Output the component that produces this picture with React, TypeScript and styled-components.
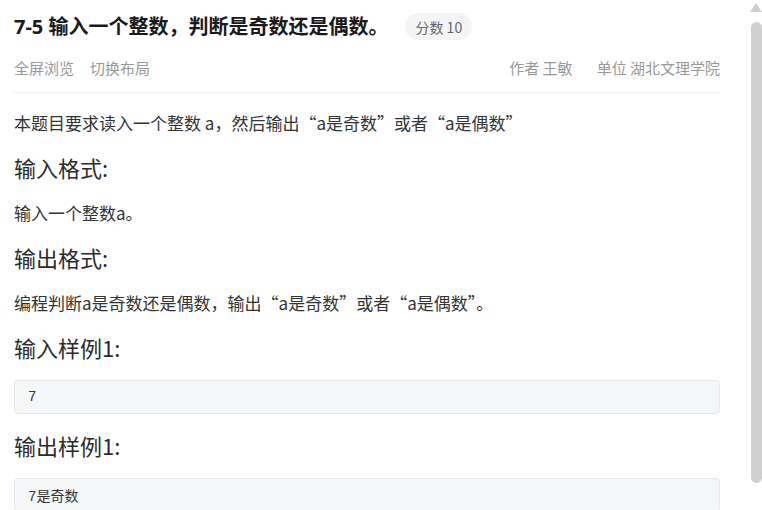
import React from "react";
import styled, { createGlobalStyle } from "styled-components";

const GlobalStyle = createGlobalStyle`
  html, body {
    margin: 0;
    padding: 0;
    background: #fff;
  }
  body {
    font-family: "Noto Sans CJK SC", "Noto Sans", sans-serif;
    color: #333;
  }
`;

const Page = styled.div`
  padding: 13px 42px 26px 14px;
`;

const Header = styled.div`
  display: flex;
  align-items: center;
  gap: 17px;
  height: 27px;
`;

const Title = styled.h1`
  margin: 0;
  font-family: "Noto Sans", "Noto Sans CJK SC", sans-serif;
  font-size: 20px;
  line-height: 27px;
  font-weight: 700;
  color: #1a1a1a;
`;

const Badge = styled.span`
  display: inline-flex;
  align-items: center;
  height: 27px;
  padding: 0 10px;
  border-radius: 14px;
  background: #f3f4f6;
  color: #666;
  font-size: 14px;
`;

const Meta = styled.div`
  display: flex;
  justify-content: space-between;
  align-items: center;
  margin-top: 18px;
  padding-bottom: 14px;
  border-bottom: 1px solid #eceef1;
  font-size: 15px;
  line-height: 20px;
  color: #999;
`;

const MetaGroup = styled.div<{ $gap: number }>`
  display: flex;
  gap: ${(p) => p.$gap}px;
`;

const Body = styled.div`
  padding-top: 17px;
`;

const Para = styled.p`
  margin: 0;
  font-size: 17px;
  line-height: 26px;
  color: #333;
`;

const Heading = styled.h3`
  margin: 16px 0 18px;
  font-size: 22px;
  line-height: 30px;
  font-weight: 400;
  color: #2b2b2b;
`;

const Sample = styled.pre`
  margin: 0;
  height: 34px;
  box-sizing: border-box;
  display: flex;
  align-items: center;
  padding: 0 13px;
  background: #f5f6f8;
  border: 1px solid #e6e8eb;
  border-radius: 4px;
  font-family: "Liberation Mono", "Noto Sans CJK SC", monospace;
  font-size: 14px;
  color: #333;
`;

/* stand-in for the browser scrollbar in the screenshot */
const ScrollBar = styled.div`
  position: fixed;
  top: 0;
  right: 0;
  width: 12px;
  height: 100vh;
  background: #fff;
  display: flex;
  flex-direction: column;
  align-items: flex-end;
`;

const ScrollArrow = styled.div`
  margin-top: 3px;
  width: 0;
  height: 0;
  border-left: 6px solid transparent;
  border-right: 6px solid transparent;
  border-bottom: 9px solid #d0d0d0;
`;

const ScrollThumb = styled.div`
  margin-top: 10px;
  width: 11px;
  height: 461px;
  border-radius: 6px;
  background: #d0d0d0;
`;

const sections = [
  { title: "输入格式:", text: "输入一个整数a。" },
  { title: "输出格式:", text: "编程判断a是奇数还是偶数，输出“a是奇数”或者“a是偶数”。" },
];

const samples = [
  { title: "输入样例1:", code: "7" },
  { title: "输出样例1:", code: "7是奇数" },
];

export default function App() {
  return (
    <>
      <GlobalStyle />
      <Page>
        <Header>
          <Title>7-5 输入一个整数，判断是奇数还是偶数。</Title>
          <Badge>分数 10</Badge>
        </Header>
        <Meta>
          <MetaGroup $gap={16}>
            <span>全屏浏览</span>
            <span>切换布局</span>
          </MetaGroup>
          <MetaGroup $gap={24}>
            <span>作者 王敏</span>
            <span>单位 湖北文理学院</span>
          </MetaGroup>
        </Meta>
        <Body>
          <Para>本题目要求读入一个整数 a，然后输出“a是奇数”或者“a是偶数”</Para>
          {sections.map((s) => (
            <React.Fragment key={s.title}>
              <Heading>{s.title}</Heading>
              <Para>{s.text}</Para>
            </React.Fragment>
          ))}
          {samples.map((s) => (
            <React.Fragment key={s.title}>
              <Heading>{s.title}</Heading>
              <Sample>{s.code}</Sample>
            </React.Fragment>
          ))}
        </Body>
      </Page>
      <ScrollBar>
        <ScrollArrow />
        <ScrollThumb />
      </ScrollBar>
    </>
  );
}
